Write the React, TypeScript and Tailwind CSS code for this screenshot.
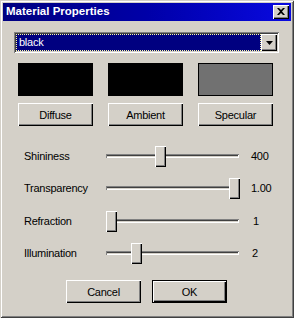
import React from 'react';

const raised =
  'shadow-[inset_1px_1px_0_#ffffff,inset_-1px_-1px_0_#000000,inset_-2px_-2px_0_#808080]';
const sunken =
  'shadow-[inset_1px_1px_0_#808080,inset_-1px_-1px_0_#ffffff,inset_2px_2px_0_#404040,inset_-2px_-2px_0_#d4d0c8]';

function Button({ label, isDefault = false }: { label: string; isDefault?: boolean }) {
  if (isDefault) {
    return (
      <div className="w-[75px] h-[23px] border border-black">
        <div className={`w-full h-full flex items-center justify-center ${raised}`}>
          <span className="pt-[1px]">{label}</span>
        </div>
      </div>
    );
  }
  return (
    <div className={`w-[75px] h-[23px] flex items-center justify-center ${raised}`}>
      <span className="pt-[1px]">{label}</span>
    </div>
  );
}

const sliders = [
  { label: 'Shininess', value: '400', offset: 49 },
  { label: 'Transparency', value: '1.00', offset: 123 },
  { label: 'Refraction', value: '1', offset: 0, valueShift: 2 },
  { label: 'Illumination', value: '2', offset: 25, valueShift: 1 },
];

const rowGaps = ['mt-0', 'mt-[11px]', 'mt-[12px]', 'mt-[11px]'];

export default function App() {
  return (
    <div
      className="w-[294px] h-[318px] bg-[#d4d0c8] p-[3px] flex flex-col text-[11px] tracking-[-0.25px] text-black font-['Liberation_Sans',Arial,sans-serif] shadow-[inset_1px_1px_0_#d4d0c8,inset_-1px_-1px_0_#404040,inset_2px_2px_0_#ffffff,inset_-2px_-2px_0_#808080]"
    >
      {/* title bar */}
      <div className="h-[18px] flex items-center justify-between pl-[3px] pr-[2px] bg-gradient-to-r from-[#000080] via-[#0000a8] to-[#0a0ae0]">
        <span className="text-white font-bold text-[11.5px] tracking-normal">Material Properties</span>
        <div className={`w-[16px] h-[14px] bg-[#d4d0c8] flex items-center justify-center ${raised}`}>
          <svg width="8" height="7" viewBox="0 0 8 7" className="mb-[1px] mr-[1px]">
            <path d="M0 0h2l2 2 2-2h2L5 3.5 8 7H6L4 5 2 7H0l3-3.5z" fill="#000" />
          </svg>
        </div>
      </div>

      {/* material dropdown */}
      <div className={`ml-[11px] mt-[11px] w-[265px] h-[21px] p-[2px] flex bg-white ${sunken}`}>
        <div className="flex-1 bg-[#000080] border border-dotted border-[#ffffa0] flex items-center pl-[2px]">
          <span className="text-white">black</span>
        </div>
        <div className={`w-[16px] bg-[#d4d0c8] flex items-center justify-center ${raised}`}>
          <svg width="7" height="4" viewBox="0 0 7 4">
            <path d="M0 0h7L3.5 4z" fill="#000" />
          </svg>
        </div>
      </div>

      {/* colour swatches */}
      <div className="ml-[15px] mt-[10px] grid grid-cols-[75px_75px_75px] gap-x-[15px] gap-y-[7px]">
        <div className="h-[33px] bg-black border border-black" />
        <div className="h-[33px] bg-black border border-black" />
        <div className="h-[33px] bg-[#717171] border border-black" />
        <Button label="Diffuse" />
        <Button label="Ambient" />
        <Button label="Specular" />
      </div>

      {/* sliders */}
      <div className="mt-[20px] flex flex-col">
        {sliders.map((s, i) => (
          <div key={s.label} className={`h-[21px] flex items-center ${rowGaps[i]}`}>
            <span className="ml-[21px] w-[82px]">{s.label}</span>
            <div className="relative w-[133px] h-[21px]">
              <div className="absolute left-0 right-0 top-[8px] h-[4px] bg-[#d4d0c8] shadow-[inset_1px_1px_0_#808080,inset_-1px_-1px_0_#ffffff,inset_0_2px_0_#404040]" />
              <div
                className={`absolute top-0 w-[11px] h-[21px] bg-[#d4d0c8] ${raised}`}
                style={{ left: s.offset }}
              />
            </div>
            <span className="ml-[12px]" style={{ marginLeft: 12 + (s.valueShift ?? 0) }}>
              {s.value}
            </span>
          </div>
        ))}
      </div>

      {/* dialog buttons */}
      <div className="mt-[16px] ml-[63px] flex gap-[11px]">
        <Button label="Cancel" />
        <Button label="OK" isDefault />
      </div>
    </div>
  );
}
